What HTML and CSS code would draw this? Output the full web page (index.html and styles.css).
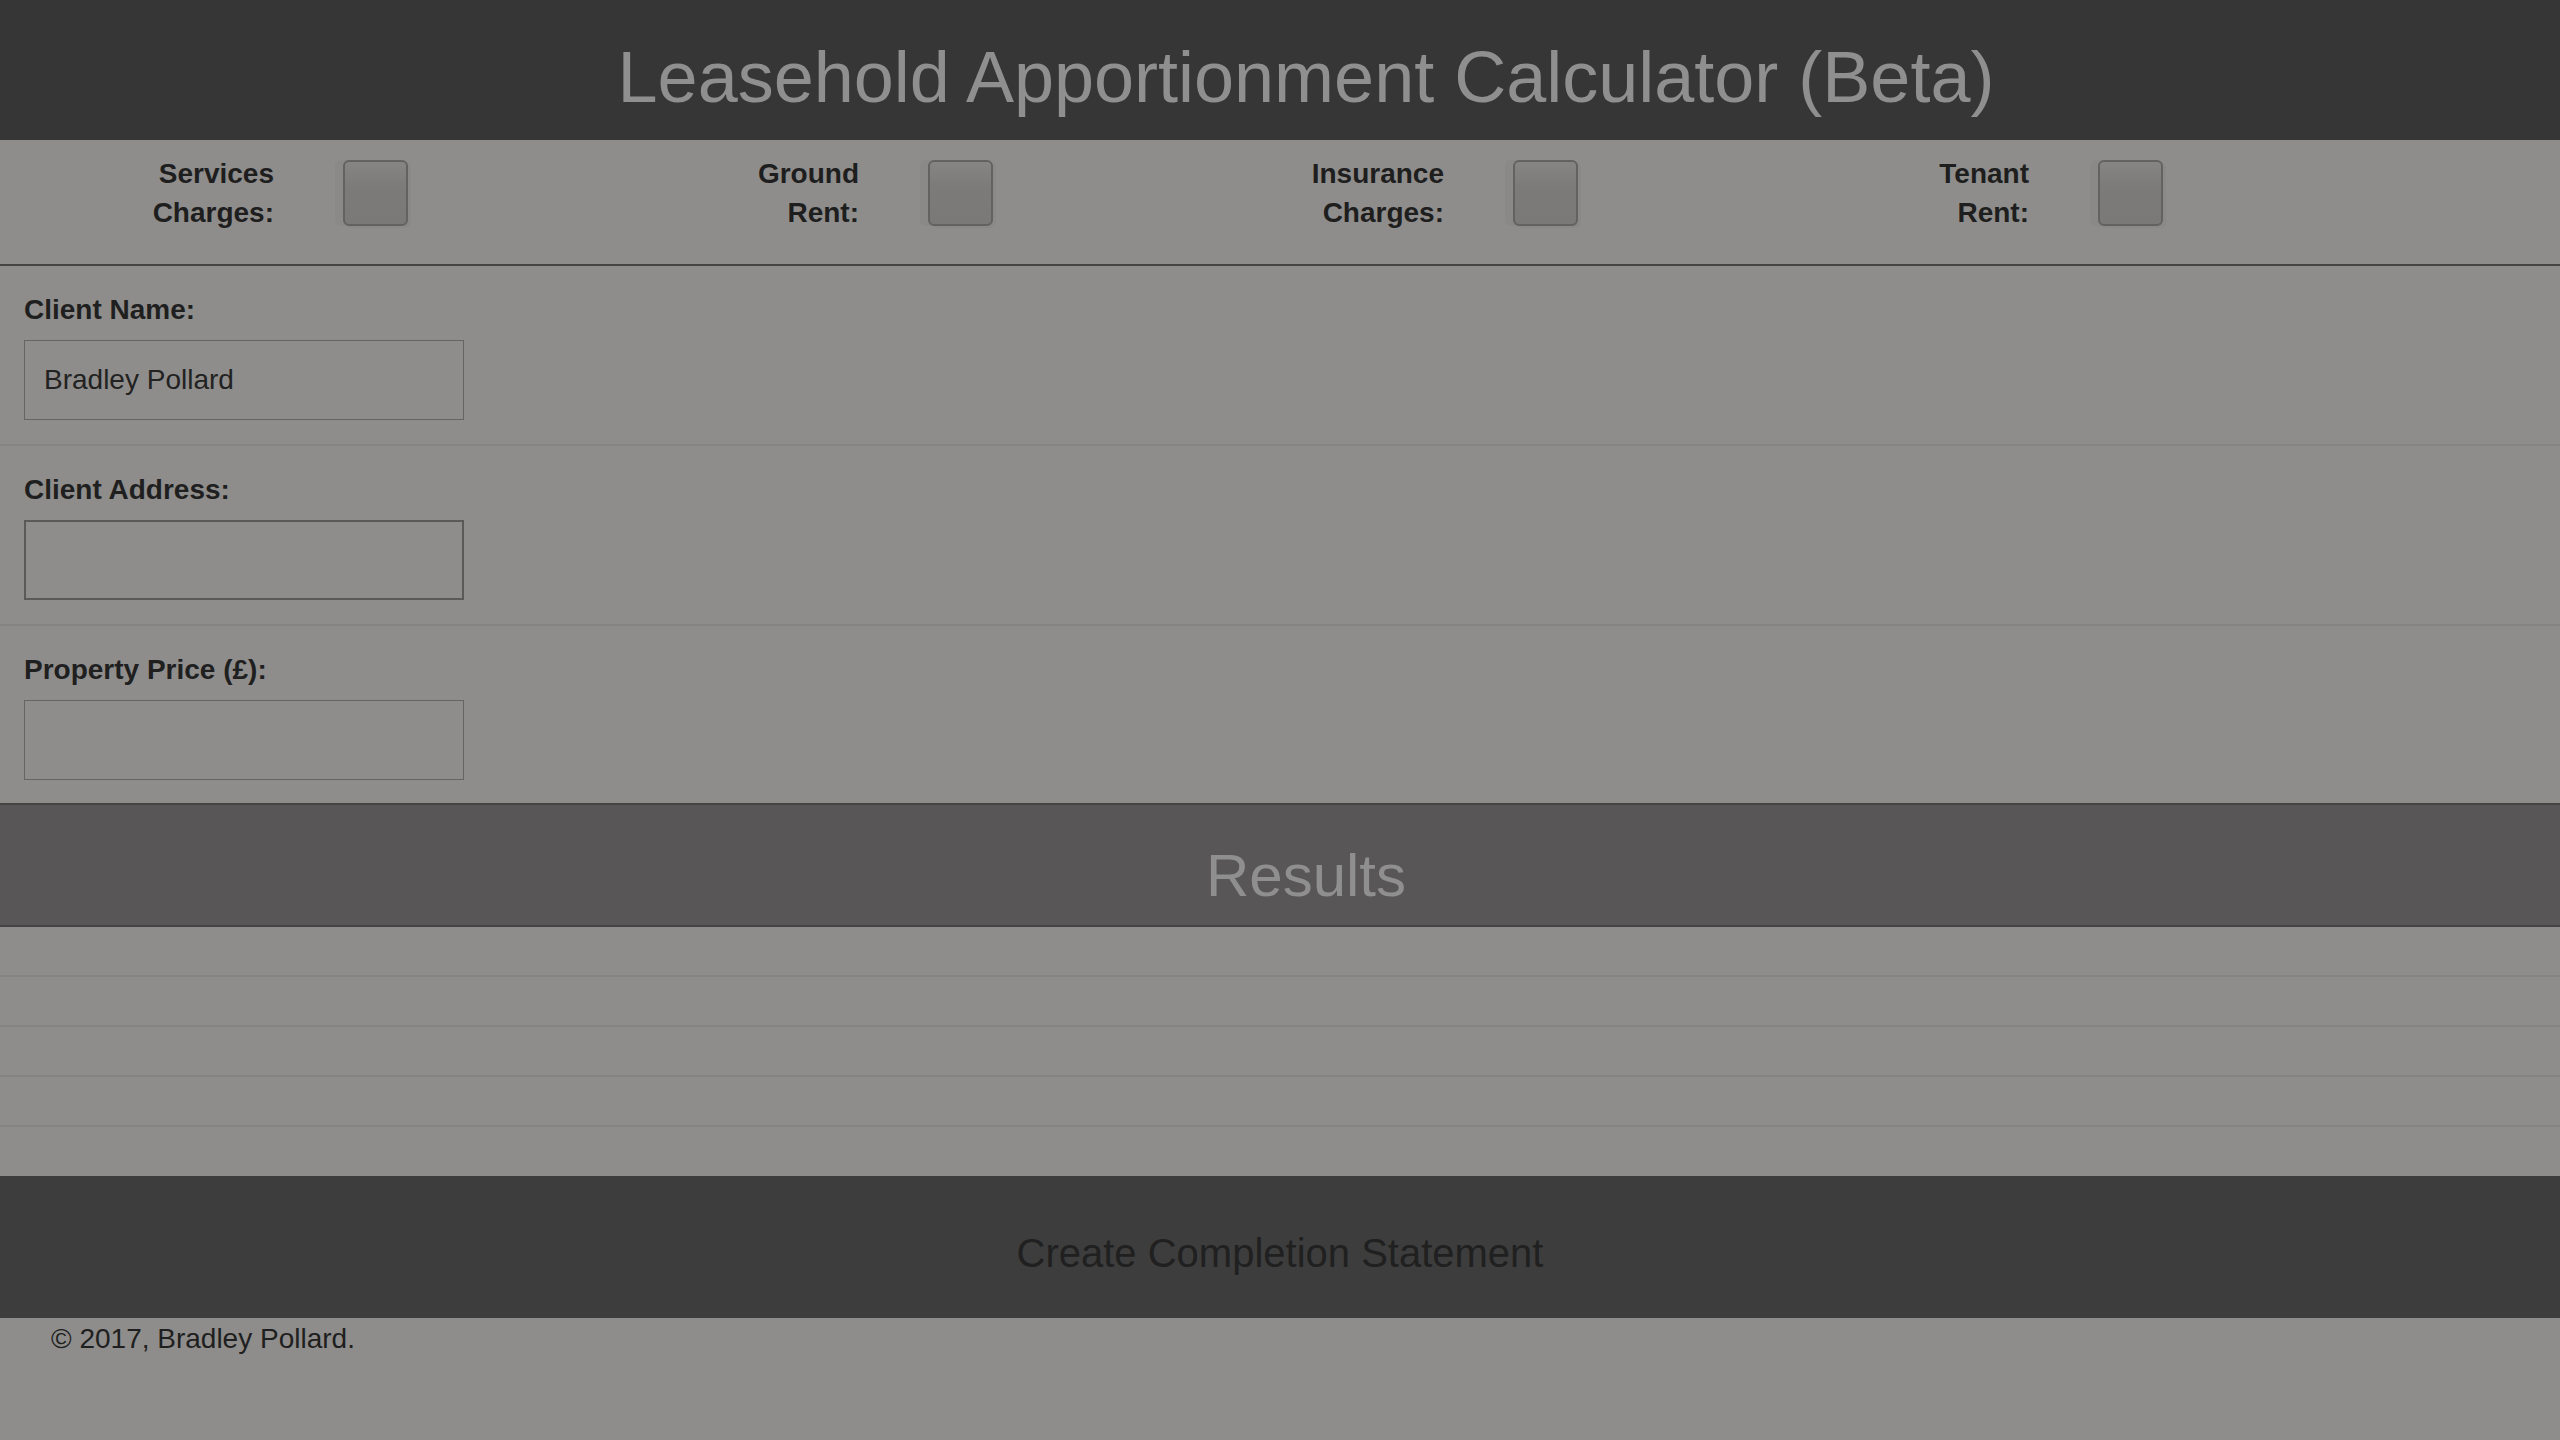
FILE: index.html
```html
<!DOCTYPE html>
<html lang="en">
<head>
<meta charset="utf-8">
<title>Leasehold Apportionment Calculator (Beta)</title>
<link rel="stylesheet" href="styles.css">
</head>
<body>
<header class="title-bar">
  <h1 class="title">Leasehold Apportionment Calculator (Beta)</h1>
</header>

<section class="options">
  <div class="option">
    <label class="option-label" for="svc">Services<br>Charges:</label>
    <input class="checkbox" type="checkbox" id="svc">
  </div>
  <div class="option">
    <label class="option-label" for="gr">Ground<br>Rent:</label>
    <input class="checkbox" type="checkbox" id="gr">
  </div>
  <div class="option">
    <label class="option-label" for="ins">Insurance<br>Charges:</label>
    <input class="checkbox" type="checkbox" id="ins">
  </div>
  <div class="option">
    <label class="option-label" for="tr">Tenant<br>Rent:</label>
    <input class="checkbox" type="checkbox" id="tr">
  </div>
</section>

<section class="fields">
  <div class="field">
    <label class="field-label" for="cn">Client Name:</label>
    <input class="text-input" type="text" id="cn" value="Bradley Pollard">
  </div>
  <div class="field">
    <label class="field-label" for="ca">Client Address:</label>
    <input class="text-input text-input-focus" type="text" id="ca">
  </div>
  <div class="field field-last">
    <label class="field-label" for="pp">Property Price (£):</label>
    <input class="text-input" type="text" id="pp">
  </div>
</section>

<section class="results">
  <h2 class="results-title">Results</h2>
  <div class="result-row"></div>
  <div class="result-row"></div>
  <div class="result-row"></div>
  <div class="result-row"></div>
  <div class="result-row result-row-last"></div>
</section>

<button class="create-btn" type="button">Create Completion Statement</button>

<footer class="footer">© 2017, Bradley Pollard.</footer>
</body>
</html>
```

FILE: styles.css
```css
html, body {
  margin: 0;
  padding: 0;
}

body {
  background: #8e8d8b;
  font-family: "Liberation Sans", Arial, Helvetica, sans-serif;
  color: #1f1f1f;
  min-height: 1440px;
}

.title-bar {
  background: #363636;
  height: 140px;
  box-sizing: border-box;
  padding: 36px 0 22px 52px;
}

.title {
  margin: 0;
  font-size: 72px;
  font-weight: normal;
  line-height: 82px;
  color: #8f8f8f;
  text-align: center;
}

.options {
  display: grid;
  grid-template-columns: repeat(4, 585px);
  padding: 14px 0 32px;
  border-bottom: 2px solid #444444;
}

.option {
  display: flex;
  align-items: center;
}

.option-label {
  width: 274px;
  text-align: right;
  font-weight: bold;
  font-size: 28px;
  line-height: 39px;
  color: #1e1e1e;
  margin-right: 69px;
}

.checkbox {
  appearance: none;
  -webkit-appearance: none;
  margin: 0;
  width: 65px;
  height: 66px;
  box-sizing: border-box;
  border: 2px solid #626262;
  border-radius: 6px;
  background: linear-gradient(#868584, #7c7b7a 40%, #7a7978);
  box-shadow: -8px 0 0 0 #8a8987, 3px 2px 0 0 #8a8987;
}

.field {
  padding: 29px 24px 24px;
  border-bottom: 2px solid #858482;
}

.field-last {
  border-bottom: none;
  padding-bottom: 23px;
}

.field-label {
  display: block;
  font-weight: bold;
  font-size: 28px;
  line-height: 30px;
  color: #1f1f1f;
  margin-bottom: 15px;
}

.text-input {
  display: block;
  width: 440px;
  height: 80px;
  box-sizing: border-box;
  margin: 0;
  padding: 0 0 0 19px;
  border: 1.5px solid #646464;
  background: transparent;
  font-family: "Liberation Sans", Arial, Helvetica, sans-serif;
  font-size: 28px;
  color: #222222;
  outline: none;
}

.text-input-focus {
  border: 2px solid #5a5a5a;
}

.results-title {
  margin: 0;
  background: #585657;
  border-top: 2px solid #444444;
  border-bottom: 2px solid #444444;
  height: 124px;
  box-sizing: border-box;
  padding: 36px 0 15px 52px;
  font-size: 60px;
  font-weight: normal;
  line-height: 69px;
  color: #8f8f8f;
  text-align: center;
}

.result-row {
  height: 48px;
  border-bottom: 2px solid #858482;
}

.result-row-last {
  height: 49px;
  border-bottom: none;
}

.create-btn {
  display: block;
  width: 100%;
  height: 142px;
  margin: 0;
  padding: 54px 0 42px;
  box-sizing: border-box;
  border: none;
  background: #3d3d3d;
  font-family: "Liberation Sans", Arial, Helvetica, sans-serif;
  font-size: 40px;
  line-height: 46px;
  color: #202020;
  text-align: center;
}

.footer {
  padding: 5px 0 0 51px;
  font-size: 28px;
  line-height: 31px;
  color: #1f1f1f;
}
```
